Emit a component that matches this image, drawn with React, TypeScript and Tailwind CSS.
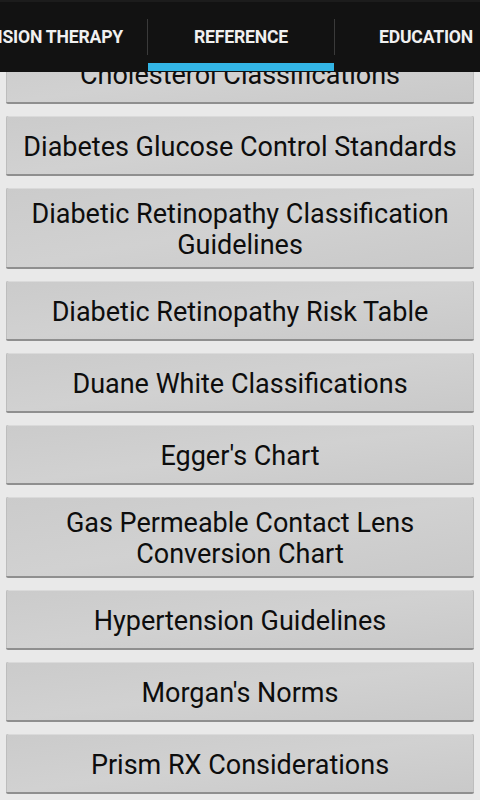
import React from "react";

const items: string[][] = [
  ["Cholesterol Classifications"],
  ["Diabetes Glucose Control Standards"],
  ["Diabetic Retinopathy Classification", "Guidelines"],
  ["Diabetic Retinopathy Risk Table"],
  ["Duane White Classifications"],
  ["Egger's Chart"],
  ["Gas Permeable Contact Lens", "Conversion Chart"],
  ["Hypertension Guidelines"],
  ["Morgan's Norms"],
  ["Prism RX Considerations"],
  ["Schirmer Test Norms"],
];

function RefButton({ lines }: { lines: string[] }) {
  return (
    <button className="flex min-h-[60px] w-full flex-col items-center justify-center rounded-[2px] border-b-2 border-[#8f8f8f] bg-gradient-to-br from-[#cbcbcb] via-[#d1d1d1] to-[#c9c9c9] px-3 pt-[11px] pb-[6px] text-center text-[27px] leading-[31px] text-[#0d0d0d] shadow-[inset_1px_0_0_#bdbdbd,inset_-1px_0_0_#bdbdbd,inset_0_1px_0_#dadada]">
      {lines.map((l) => (
        <span key={l} className="block">
          {l}
        </span>
      ))}
    </button>
  );
}

export default function App() {
  return (
    <div
      className="relative h-[800px] w-[480px] overflow-hidden bg-[#e9e9e9]"
      style={{ fontFamily: "Roboto, 'Noto Sans', sans-serif" }}
    >
      {/* Tab strip */}
      <div className="absolute inset-x-0 top-0 z-10 h-[72px] overflow-hidden border-t-2 border-[#1c1c1c] bg-[#121212]">
        <div className="flex h-full items-center text-[17.6px] font-bold uppercase tracking-[-0.2px] text-[#f0f0f0]">
          <div className="flex w-[147px] shrink-0 justify-end whitespace-nowrap pr-[24px]">
            Vision Therapy
          </div>
          <div className="h-[36px] w-px shrink-0 bg-[#3a3a3a]" />
          <div className="relative flex h-full w-[186px] shrink-0 items-center justify-center">
            Reference
            <div className="absolute inset-x-0 bottom-[1px] h-[8px] bg-[#33b5e5]" />
          </div>
          <div className="h-[36px] w-px shrink-0 bg-[#3a3a3a]" />
          <div className="shrink-0 whitespace-nowrap pl-[44px]">Education</div>
        </div>
      </div>

      {/* List (scrolled) */}
      <div className="flex flex-col gap-[12px] px-[6px] pt-[44px]">
        {items.map((lines) => (
          <RefButton key={lines.join(" ")} lines={lines} />
        ))}
      </div>
    </div>
  );
}
